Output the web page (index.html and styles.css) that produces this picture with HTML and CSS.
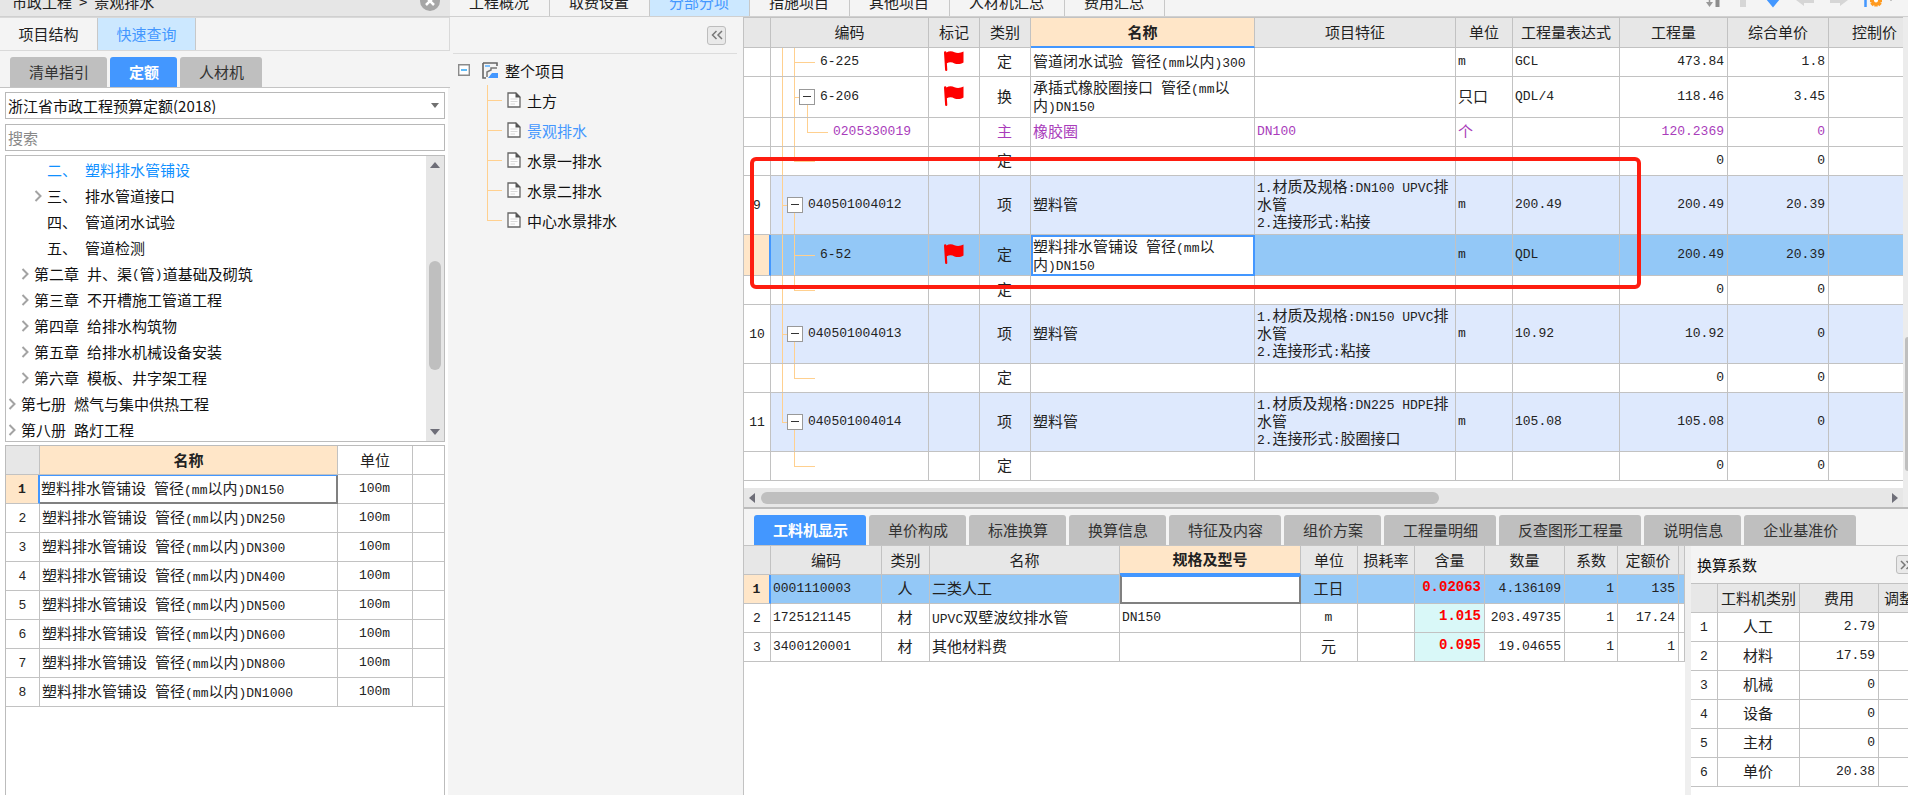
FILE: index.html
```html
<!DOCTYPE html>
<html lang="zh-CN">
<head>
<meta charset="utf-8">
<title>市政工程 - 景观排水</title>
<link rel="stylesheet" href="styles.css">
</head>
<body>
<svg class="defs" aria-hidden="true">
  <symbol id="flag" viewBox="0 0 20 20"><path fill="#fe0000" d="M0 1.5Q0 .3 1.2.3T2.4 1.5C5-.3 8-.2 10.500 1.200C13 2.400 17 2 19.500.6V11.500C16.500 13.400 13 13.500 10.500 12.400C8 11 5 11 2.900 12.300L3.300 19Q3.300 20 2.200 20T1.100 19Z"/></symbol>
  <symbol id="doc" viewBox="0 0 14 16"><path d="M1 1H9L13 5V15H1Z" fill="#fdfdfd" stroke="#666" stroke-width="1.300"/><path d="M8.500.5L13.500 5.500H8.500Z" fill="#555"/><path d="M3.500 7H10.500M3.500 9.500H10.500M3.500 12H8" stroke="#d8d8d8"/></symbol>
  <symbol id="chev" viewBox="0 0 8 12"><path d="M1.500 1L6.500 6L1.500 11" fill="none" stroke="#a3a3a3" stroke-width="2"/></symbol>
  <symbol id="dbl" viewBox="0 0 14 12"><path d="M6.500 2L2.500 6L6.500 10M12 2L8 6L12 10" fill="none" stroke="#777" stroke-width="1.500"/></symbol>
</svg>
<div class="app">
  <aside class="query">
    <header class="crumb"><div class="path"><span>市政工程</span><span>&gt;</span><span>景观排水</span></div>
      <button class="close" aria-label="关闭"><svg viewBox="0 0 20 20"><circle cx="10" cy="10" r="10" fill="#a6a6a6"/><path d="M6 6L14 14M14 6L6 14" stroke="#fff" stroke-width="2.500"/></svg></button>
    </header>
    <nav class="modes"><button>项目结构</button><button class="on">快速查询</button></nav>
    <nav class="tabs"><button>清单指引</button><button class="on">定额</button><button>人材机</button></nav>
    <div class="body">
      <div class="pick">
        <select aria-label="定额库"><option>浙江省市政工程预算定额(2018)</option></select>
        <svg viewBox="0 0 8 5"><path d="M0 0H8L4 5Z" fill="#707070"/></svg>
      </div>
      <input class="search" type="text" placeholder="搜索" aria-label="搜索">
      <div class="lib">
        <ul class="chapters">
          <li class="d2 on"><i></i>二、<b></b>塑料排水管铺设</li>
          <li class="d2"><svg><use href="#chev"/></svg>三、<b></b>排水管道接口</li>
          <li class="d2"><i></i>四、<b></b>管道闭水试验</li>
          <li class="d2"><i></i>五、<b></b>管道检测</li>
          <li class="d1"><svg><use href="#chev"/></svg>第二章<b></b>井、渠<span class="l">(</span>管<span class="l">)</span>道基础及砌筑</li>
          <li class="d1"><svg><use href="#chev"/></svg>第三章<b></b>不开槽施工管道工程</li>
          <li class="d1"><svg><use href="#chev"/></svg>第四章<b></b>给排水构筑物</li>
          <li class="d1"><svg><use href="#chev"/></svg>第五章<b></b>给排水机械设备安装</li>
          <li class="d1"><svg><use href="#chev"/></svg>第六章<b></b>模板、井字架工程</li>
          <li class="d0"><svg><use href="#chev"/></svg>第七册<b></b>燃气与集中供热工程</li>
          <li class="d0"><svg><use href="#chev"/></svg>第八册<b></b>路灯工程</li>
        </ul>
        <div class="vbar"><svg viewBox="0 0 10 6"><path d="M0 6H10L5 0Z" fill="#6e6e78"/></svg><span></span><svg viewBox="0 0 10 6"><path d="M0 0H10L5 6Z" fill="#6e6e78"/></svg></div>
      </div>
      <div class="norms">
        <table class="grid">
          <colgroup><col class="w34"><col><col class="w75"><col class="w31"></colgroup>
          <thead><tr><th></th><th class="hot">名称</th><th class="plain">单位</th><th class="plain"></th></tr></thead>
          <tbody>
            <tr><td class="no cur">1</td><td class="focus">塑料排水管铺设<b></b>管径<span class="l">(mm</span>以内<span class="l">)DN150</span></td><td class="c n">100m</td><td></td></tr>
            <tr><td class="no">2</td><td>塑料排水管铺设<b></b>管径<span class="l">(mm</span>以内<span class="l">)DN250</span></td><td class="c n">100m</td><td></td></tr>
            <tr><td class="no">3</td><td>塑料排水管铺设<b></b>管径<span class="l">(mm</span>以内<span class="l">)DN300</span></td><td class="c n">100m</td><td></td></tr>
            <tr><td class="no">4</td><td>塑料排水管铺设<b></b>管径<span class="l">(mm</span>以内<span class="l">)DN400</span></td><td class="c n">100m</td><td></td></tr>
            <tr><td class="no">5</td><td>塑料排水管铺设<b></b>管径<span class="l">(mm</span>以内<span class="l">)DN500</span></td><td class="c n">100m</td><td></td></tr>
            <tr><td class="no">6</td><td>塑料排水管铺设<b></b>管径<span class="l">(mm</span>以内<span class="l">)DN600</span></td><td class="c n">100m</td><td></td></tr>
            <tr><td class="no">7</td><td>塑料排水管铺设<b></b>管径<span class="l">(mm</span>以内<span class="l">)DN800</span></td><td class="c n">100m</td><td></td></tr>
            <tr><td class="no">8</td><td>塑料排水管铺设<b></b>管径<span class="l">(mm</span>以内<span class="l">)DN1000</span></td><td class="c n">100m</td><td></td></tr>
          </tbody>
        </table>
      </div>
    </div>
  </aside>

  <div class="work">
    <nav class="pages">
      <button>工程概况</button><button>取费设置</button><button class="on">分部分项</button><button>措施项目</button><button>其他项目</button><button>人材机汇总</button><button>费用汇总</button>
      <div class="tools">
        <svg class="t14" viewBox="0 0 14 20"><path d="M3.500 0V14" stroke="#999" stroke-width="1.500"/><path d="M0 14H7L3.500 19Z" fill="#999"/><path d="M11.500 0V19" stroke="#8c8c8c" stroke-width="4"/></svg>
        <svg class="t14" viewBox="0 0 14 20"><path d="M7 2L14 11H10V19H4V11H0Z" fill="#d6d6d6"/></svg>
        <svg class="t14" viewBox="0 0 14 20"><path d="M4 0H10V11H14L7 19.500L0 11H4Z" fill="#4397ff"/></svg>
        <svg class="t18" viewBox="0 0 18 20"><path d="M0 12L8 5V9H18V15H8V18Z" fill="#d6d6d6"/></svg>
        <svg class="t18" viewBox="0 0 18 20"><path d="M18 12L10 5V9H0V15H10V18Z" fill="#d6d6d6"/></svg>
        <svg class="t30" viewBox="0 0 30 20"><path d="M1.500 0V19" stroke="#4397ff" stroke-width="2.500"/><path d="M12 6V18.500M6 12.500H18M7.500 8L16.500 17M16.500 8L7.500 17" stroke="#ff9a1f" stroke-width="3.500"/><circle cx="12" cy="12.500" r="4.500" fill="#ff9a1f"/><circle cx="12" cy="12.500" r="2" fill="#fff"/><path d="M24 9H30L27 13Z" fill="#777"/></svg>
      </div>
    </nav>
    <div class="split">
      <section class="project">
        <div class="fold"><button class="dbl" aria-label="收起"><svg><use href="#dbl"/></svg></button></div>
        <div class="root"><svg class="minus" viewBox="0 0 12 12"><path d="M.7.7H11.300V11.300H.7Z" fill="#fff" stroke="#8a8a8a" stroke-width="1.400"/><path d="M3 6H9" stroke="#2aa5f5" stroke-width="1.500"/></svg><svg class="proj" viewBox="0 0 17 17"><path d="M1 1H15V4M1 1V16H4" fill="none" stroke="#666" stroke-width="1.600"/><path d="M3 4H8" stroke="#7dc0ff" stroke-width="2"/><path d="M5 15V10L9 8V6H15" fill="none" stroke="#777" stroke-width="1.500"/><path d="M6 16L10 11H16V16Z" fill="#4397ff"/></svg>整个项目</div>
        <ul>
          <li><svg><use href="#doc"/></svg>土方</li>
          <li class="on"><svg><use href="#doc"/></svg>景观排水</li>
          <li><svg><use href="#doc"/></svg>水景一排水</li>
          <li><svg><use href="#doc"/></svg>水景二排水</li>
          <li><svg><use href="#doc"/></svg>中心水景排水</li>
        </ul>
      </section>

      <main>
        <div class="upper">
          <div class="sheet">
            <table class="grid bill">
              <colgroup><col class="w27"><col class="w158"><col class="w51"><col class="w51"><col class="w224"><col class="w201"><col class="w57"><col class="w107"><col class="w108"><col class="w101"><col></colgroup>
              <thead><tr><th></th><th>编码</th><th>标记</th><th>类别</th><th class="hot line">名称</th><th>项目特征</th><th>单位</th><th>工程量表达式</th><th>工程量</th><th>综合单价</th><th class="cut">控制价</th></tr></thead>
              <tbody>
                <tr><td></td><td class="code leaf n">6-225</td><td class="c"><svg class="flag"><use href="#flag"/></svg></td><td class="c">定</td><td>管道闭水试验<b></b>管径<span class="l">(mm</span>以内<span class="l">)300</span></td><td></td><td class="n">m</td><td class="n">GCL</td><td class="r n">473.84</td><td class="r n">1.8</td><td></td></tr>
                <tr class="h41"><td></td><td class="code open n"><button class="tog" aria-label="折叠"></button>6-206</td><td class="c"><svg class="flag"><use href="#flag"/></svg></td><td class="c">换</td><td>承插式橡胶圈接口<b></b>管径<span class="l">(mm</span>以<br>内<span class="l">)DN150</span></td><td></td><td>只口</td><td class="n">QDL/4</td><td class="r n">118.46</td><td class="r n">3.45</td><td></td></tr>
                <tr class="mat"><td></td><td class="code deep n">0205330019</td><td></td><td class="c">主</td><td>橡胶圈</td><td class="n">DN100</td><td>个</td><td></td><td class="r n">120.2369</td><td class="r n">0</td><td></td></tr>
                <tr><td></td><td class="code last n"></td><td></td><td class="c">定</td><td></td><td></td><td></td><td></td><td class="r n">0</td><td class="r n">0</td><td></td></tr>
                <tr class="item"><td class="no">9</td><td class="code head n"><button class="tog" aria-label="折叠"></button>040501004012</td><td></td><td class="c">项</td><td>塑料管</td><td><span class="l">1.</span>材质及规格<span class="l">:DN100 UPVC</span>排<br>水管<br><span class="l">2.</span>连接形式<span class="l">:</span>粘接</td><td class="n">m</td><td class="n">200.49</td><td class="r n">200.49</td><td class="r n">20.39</td><td></td></tr>
                <tr class="h41 sel"><td class="cur"></td><td class="code leaf n">6-52</td><td class="c"><svg class="flag"><use href="#flag"/></svg></td><td class="c">定</td><td class="edit">塑料排水管铺设<b></b>管径<span class="l">(mm</span>以<br>内<span class="l">)DN150</span></td><td></td><td class="n">m</td><td class="n">QDL</td><td class="r n">200.49</td><td class="r n">20.39</td><td></td></tr>
                <tr><td></td><td class="code last n"></td><td></td><td class="c">定</td><td></td><td></td><td></td><td></td><td class="r n">0</td><td class="r n">0</td><td></td></tr>
                <tr class="item"><td class="no">10</td><td class="code head n"><button class="tog" aria-label="折叠"></button>040501004013</td><td></td><td class="c">项</td><td>塑料管</td><td><span class="l">1.</span>材质及规格<span class="l">:DN150 UPVC</span>排<br>水管<br><span class="l">2.</span>连接形式<span class="l">:</span>粘接</td><td class="n">m</td><td class="n">10.92</td><td class="r n">10.92</td><td class="r n">0</td><td></td></tr>
                <tr><td></td><td class="code last n"></td><td></td><td class="c">定</td><td></td><td></td><td></td><td></td><td class="r n">0</td><td class="r n">0</td><td></td></tr>
                <tr class="item"><td class="no">11</td><td class="code head end n"><button class="tog" aria-label="折叠"></button>040501004014</td><td></td><td class="c">项</td><td>塑料管</td><td><span class="l">1.</span>材质及规格<span class="l">:DN225 HDPE</span>排<br>水管<br><span class="l">2.</span>连接形式<span class="l">:</span>胶圈接口</td><td class="n">m</td><td class="n">105.08</td><td class="r n">105.08</td><td class="r n">0</td><td></td></tr>
                <tr><td></td><td class="code tail n"></td><td></td><td class="c">定</td><td></td><td></td><td></td><td></td><td class="r n">0</td><td class="r n">0</td><td></td></tr>
              </tbody>
            </table>
            <div class="hbar"><svg viewBox="0 0 6 10"><path d="M6 0V10L0 5Z" fill="#6e6e78"/></svg><span></span><svg viewBox="0 0 6 10"><path d="M0 0V10L6 5Z" fill="#6e6e78"/></svg></div>
            <div class="mark"></div>
          </div>
          <div class="edge"><span></span></div>
        </div>
        <nav class="tabs"><button class="on">工料机显示</button><button>单价构成</button><button>标准换算</button><button>换算信息</button><button>特征及内容</button><button>组价方案</button><button>工程量明细</button><button>反查图形工程量</button><button>说明信息</button><button>企业基准价</button></nav>
        <div class="lower">
          <div class="res">
            <table class="grid">
              <colgroup><col class="w27"><col class="w111"><col class="w48"><col class="w190"><col><col class="w57"><col class="w57"><col class="w70"><col class="w80"><col class="w53"><col class="w61"><col class="w6"></colgroup>
              <thead><tr><th></th><th>编码</th><th>类别</th><th>名称</th><th class="hot line">规格及型号</th><th>单位</th><th>损耗率</th><th>含量</th><th>数量</th><th>系数</th><th>定额价</th><th></th></tr></thead>
              <tbody>
                <tr class="sel"><td class="no cur">1</td><td class="n">0001110003</td><td class="c">人</td><td>二类人工</td><td class="focus"></td><td class="c">工日</td><td></td><td class="r red">0.02063</td><td class="r n">4.136109</td><td class="r n">1</td><td class="r n">135</td><td></td></tr>
                <tr><td class="no">2</td><td class="n">1725121145</td><td class="c">材</td><td><span class="l">UPVC</span>双壁波纹排水管</td><td class="n">DN150</td><td class="c n">m</td><td></td><td class="r red">1.015</td><td class="r n">203.49735</td><td class="r n">1</td><td class="r n">17.24</td><td></td></tr>
                <tr><td class="no">3</td><td class="n">3400120001</td><td class="c">材</td><td>其他材料费</td><td></td><td class="c">元</td><td></td><td class="r red">0.095</td><td class="r n">19.04655</td><td class="r n">1</td><td class="r n">1</td><td></td></tr>
              </tbody>
            </table>
          </div>
          <section class="coef">
            <header><h2>换算系数</h2><button class="dbl" aria-label="展开"><svg class="flip"><use href="#dbl"/></svg></button></header>
            <table class="grid">
              <colgroup><col class="w27"><col class="w82"><col class="w79"><col></colgroup>
              <thead><tr><th></th><th>工料机类别</th><th>费用</th><th class="adj">调整</th></tr></thead>
              <tbody>
                <tr><td class="no">1</td><td class="c">人工</td><td class="r n">2.79</td><td></td></tr>
                <tr><td class="no">2</td><td class="c">材料</td><td class="r n">17.59</td><td></td></tr>
                <tr><td class="no">3</td><td class="c">机械</td><td class="r n">0</td><td></td></tr>
                <tr><td class="no">4</td><td class="c">设备</td><td class="r n">0</td><td></td></tr>
                <tr><td class="no">5</td><td class="c">主材</td><td class="r n">0</td><td></td></tr>
                <tr><td class="no">6</td><td class="c">单价</td><td class="r n">20.38</td><td></td></tr>
              </tbody>
            </table>
          </section>
        </div>
      </main>
    </div>
  </div>
</div>
</body>
</html>
```

FILE: styles.css
```css
* { box-sizing: border-box; }
body { margin: 0; background: #f4f4f4; color: #222; font: 15px/17px "Noto Sans CJK SC", sans-serif; overflow: hidden; }
button { font: inherit; color: inherit; border: 0; background: none; padding: 0; }
ul { list-style: none; margin: 0; padding: 0; }
svg { display: block; flex: none; }
.defs { display: none; }
.l, .n { font-family: "Liberation Mono", "Noto Sans CJK SC", monospace; font-size: 13px; }
.l { line-height: 1; }
b { display: inline-block; width: 8px; }

.app { display: flex; height: 100vh; }

/* quick query panel */
.query { flex: none; width: 450px; display: flex; flex-direction: column; }
.crumb { height: 17px; background: #e6e6e6; border-bottom: 1px solid #d0d0d0; display: flex; justify-content: space-between; align-items: center; padding: 0 10px 14px 12px; }
.path { display: flex; gap: 7px; }
.close svg { width: 20px; height: 20px; }
.modes { display: flex; height: 34px; border: 1px solid #d9d9d9; border-left: 0; }
.modes button { width: 98px; border-right: 1px solid #c8c8c8; padding-bottom: 2px; }
.modes .on { background: #cce8ff; color: #4397ff; }
.tabs { display: flex; gap: 3px; padding: 6px 10px 0; border-bottom: 1px solid #c4c4c4; }
.tabs button { height: 30px; padding: 0 18px 1px 19px; background: #bfbfbf; border-radius: 3px 3px 0 0; color: #333; }
.tabs .on { background: #4397ff; color: #fff; font-weight: bold; }
.query .body { flex: 1; min-height: 0; display: flex; flex-direction: column; background: #fff; margin-right: 2px; padding: 4px 3px 0 5px; }
.pick { display: grid; align-items: center; margin-bottom: 5px; }
.pick > * { grid-area: 1 / 1; }
.pick svg { width: 8px; height: 5px; justify-self: end; margin-right: 6px; pointer-events: none; }
.pick select, .search { appearance: none; width: 100%; height: 27px; border: 1px solid #b8b8b8; border-radius: 0; background: #fff; padding: 0 2px 1px; font: inherit; color: #111; outline: 0; }
.search::placeholder { color: #888; }
.lib { display: flex; height: 287px; margin-top: 4px; border: 1px solid #bcbcbc; }
.chapters { flex: 1; overflow: hidden; padding-top: 1px; color: #111; }
.chapters li { display: flex; align-items: center; height: 26px; line-height: 26px; }
.chapters svg, .chapters i { width: 8px; height: 12px; margin-right: 5px; }
.chapters .d0 { padding-left: 2px; }
.chapters .d1 { padding-left: 15px; }
.chapters .d2 { padding-left: 28px; }
.chapters .on { color: #1090ff; }
.vbar { width: 18px; background: #e6e6e6; display: flex; flex-direction: column; align-items: center; padding: 6px 0; }
.vbar svg { width: 10px; height: 6px; }
.vbar span { width: 12px; height: 109px; border-radius: 6px; background: #bfbfbf; margin: 93px 0 auto; }
.norms { flex: 1; border: 1px solid #bcbcbc; border-bottom: 0; margin-top: 3px; }

/* data grids */
.grid { width: 100%; table-layout: fixed; border-collapse: separate; border-spacing: 0; white-space: nowrap; }
.grid th { height: 29px; padding: 0 0 2px; font-weight: normal; background: #e7e7e7; }
.grid th, .grid td { border-right: 1px solid #c2c2c2; border-bottom: 1px solid #c2c2c2; overflow: hidden; }
.grid td { height: 29px; padding: 0 3px 3px 2px; }
.grid .n, .grid .no { padding-bottom: 1px; }
.norms tr > :last-child { border-right: 0; }
.grid .plain { background: #fff; }
.grid .hot { background: #ffe6c8; font-weight: bold; }
.grid .line { border-bottom: 2px solid #4397ff; }
.grid .c { text-align: center; }
.grid .r { text-align: right; }
.grid .no { text-align: center; padding: 0; font-family: "Liberation Mono", monospace; font-size: 13px; }
.grid .cur { background: #ffe6c8; font-weight: bold; border-right: 2px solid #4397ff; }
.grid .sel { background: #93c8f7; }
.grid .focus { background: #fff; border: 2px solid #808080; border-top-color: #4397ff; padding-left: 1px; }
.norms .focus { border-left: 0; border-top: 1px solid #4397ff; }
.grid .edit { background: #fff; border: 2px solid #4397ff; padding: 0 0 1px; }
.grid .red { color: #fe0000; background: #d9f8f8; font: bold 14px/17px "Liberation Mono", monospace; }
.grid .sel .red { background: none; }
.w6 { width: 6px; } .w27 { width: 27px; } .w31 { width: 31px; } .w34 { width: 34px; }
.w48 { width: 48px; } .w51 { width: 51px; } .w53 { width: 53px; } .w57 { width: 57px; }
.w61 { width: 61px; } .w70 { width: 70px; } .w75 { width: 75px; } .w79 { width: 79px; }
.w80 { width: 80px; } .w82 { width: 82px; } .w101 { width: 101px; } .w107 { width: 107px; }
.w108 { width: 108px; } .w111 { width: 111px; } .w158 { width: 158px; } .w190 { width: 190px; }
.w201 { width: 201px; } .w224 { width: 224px; }

/* workspace */
.work { flex: 1; min-width: 0; display: flex; flex-direction: column; }
.pages { display: flex; align-items: flex-end; height: 17px; border-bottom: 1px solid #d0d0d0; overflow: hidden; }
.pages button { flex: none; height: 30px; padding: 0 20px 0 19px; border-right: 1px solid #c8c8c8; }
.pages .on { background: #cce8ff; color: #4397ff; }
.tools { margin: 0 0 8px auto; display: flex; gap: 16px; padding-right: 14px; align-items: flex-end; height: 8px; }
.tools svg { height: 20px; }
.t14 { width: 14px; } .t18 { width: 18px; } .t30 { width: 30px; }
.split { flex: 1; min-height: 0; display: flex; }
.project { flex: none; width: 294px; padding: 0 6px 0 3px; border-right: 1px solid #c2c2c2; }
.fold { height: 37px; border-bottom: 1px solid #dcdcdc; display: flex; justify-content: flex-end; align-items: center; padding-right: 11px; }
.dbl { width: 19px; height: 19px; border: 1px solid #bdbdbd; border-radius: 3px; background: #e9e9e9; display: grid; place-items: center; flex: none; }
.dbl svg { width: 14px; height: 12px; }
.flip { transform: scaleX(-1); }
.root { display: flex; align-items: center; height: 30px; margin-top: 1px; padding-left: 5px; color: #111; }
.minus { width: 12px; height: 12px; margin-right: 12px; }
.proj { width: 17px; height: 17px; margin-right: 6px; }
.project ul { color: #111; padding-left: 34px; }
.project li { display: flex; align-items: center; gap: 6px; height: 30px; padding-left: 20px;
  background: linear-gradient(#ffd08f, #ffd08f) 0 0 / 1px 100% no-repeat, linear-gradient(#ffd08f, #ffd08f) 0 50% / 15px 1px no-repeat; }
.project li:last-child { background-size: 1px 50%, 15px 1px; }
.project li svg { width: 14px; height: 16px; }
.project .on { color: #4397ff; }
main { flex: 1; min-width: 0; display: flex; flex-direction: column; }
.upper { display: flex; border-bottom: 2px solid #bcbcbc; }
.sheet { position: relative; flex: 1; min-width: 0; background: #fff; }
.edge { width: 5px; background: #ececec; display: flex; align-items: flex-end; }
.edge span { width: 5px; margin-left: 2px; height: 134px; margin-bottom: 36px; background: #bfbfbf; border-radius: 6px 0 0 6px; }
.bill th { height: 31px; border-top: 1px solid #c2c2c2; }
.bill tr > :last-child { border-right: 0; }
.bill .cut { text-align: left; padding-left: 23px; }
.grid .h41 td { height: 41px; }
.grid .item td { height: 59px; background-color: #dee9fd; }
.grid .item .no { background: #fff; }
.mat td { color: #a93dbb; }
.flag { width: 20px; height: 20px; margin: auto; }
.tog { display: inline-block; vertical-align: middle; width: 16px; height: 16px; margin-right: 5px; border: 1px solid #999;
  background: linear-gradient(#333, #333) center / 8px 1px no-repeat #fff; }

/* outline guides behind the code column */
.bill .code { --g: linear-gradient(#ffd08f, #ffd08f); background-image: var(--g), var(--g), var(--g), var(--g); background-repeat: no-repeat; }
.bill .leaf { padding-left: 49px; background-size: 1px 100%, 1px 100%, 21px 1px, 0 0; background-position: 11px 0, 23px 0, 23px 50%, 0 0; }
.bill .open { padding-left: 28px; background-size: 1px 100%, 1px 100%, 6px 1px, 1px 50%; background-position: 11px 0, 23px 0, 23px 50%, 36px 100%; }
.bill .deep { padding-left: 62px; background-size: 1px 100%, 1px 100%, 21px 1px, 1px 50%; background-position: 11px 0, 23px 0, 36px 50%, 36px 0; }
.bill .last { background-size: 1px 100%, 1px 50%, 21px 1px, 0 0; background-position: 11px 0, 23px 0, 23px 50%, 0 0; }
.bill .tail { background-size: 0 0, 1px 50%, 21px 1px, 0 0; background-position: 0 0, 23px 0, 23px 50%, 0 0; }
.bill .head { padding-left: 16px; background-size: 1px 100%, 1px 50%, 6px 1px, 0 0; background-position: 11px 0, 23px 100%, 11px 50%, 0 0; }
.bill .end { background-size: 1px 50%, 1px 50%, 6px 1px, 0 0; }

.hbar { display: flex; align-items: center; height: 19px; margin-top: 7px; padding: 0 5px; background: #e7e7e7; }
.hbar svg { width: 6px; height: 10px; }
.hbar span { width: 59%; height: 12px; margin: 0 auto 0 6px; border-radius: 6px; background: #bfbfbf; }
.mark { position: absolute; left: 6px; top: 140px; width: 891px; height: 132px; border: 4px solid #fe1d10; border-radius: 6px; }
.lower { flex: 1; min-height: 0; display: flex; }
.res { flex: 1; min-width: 0; background: #fff; }
.coef { flex: none; width: 223px; border-left: 6px solid #efefef; background: #fff; overflow: hidden; }
.coef header { display: flex; justify-content: space-between; align-items: center; height: 38px; padding-left: 6px; background: #f4f4f4; border-bottom: 1px solid #c2c2c2; }
.coef header .dbl { margin-right: -7px; }
.coef h2 { margin: 0; font: inherit; color: #111; }
.coef tr > :last-child { border-right: 0; }
.coef .adj { text-align: left; padding-left: 5px; }
```
